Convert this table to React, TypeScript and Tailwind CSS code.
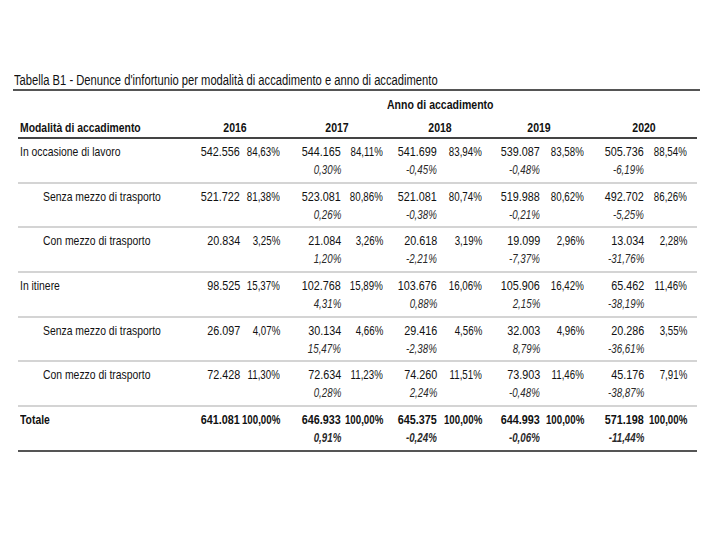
const FONT = { fontFamily: '"Liberation Sans Narrow", "Arial Narrow", "Liberation Sans", Arial, sans-serif' };

type Row = {
  label: string;
  indent?: boolean;
  bold?: boolean;
  values: [string, string][];
  change: string[];
};

const ROWS: Row[] = [
  {
    label: "In occasione di lavoro",
    values: [["542.556", "84,63%"], ["544.165", "84,11%"], ["541.699", "83,94%"], ["539.087", "83,58%"], ["505.736", "88,54%"]],
    change: ["", "0,30%", "-0,45%", "-0,48%", "-6,19%"],
  },
  {
    label: "Senza mezzo di trasporto",
    indent: true,
    values: [["521.722", "81,38%"], ["523.081", "80,86%"], ["521.081", "80,74%"], ["519.988", "80,62%"], ["492.702", "86,26%"]],
    change: ["", "0,26%", "-0,38%", "-0,21%", "-5,25%"],
  },
  {
    label: "Con mezzo di trasporto",
    indent: true,
    values: [["20.834", "3,25%"], ["21.084", "3,26%"], ["20.618", "3,19%"], ["19.099", "2,96%"], ["13.034", "2,28%"]],
    change: ["", "1,20%", "-2,21%", "-7,37%", "-31,76%"],
  },
  {
    label: "In itinere",
    values: [["98.525", "15,37%"], ["102.768", "15,89%"], ["103.676", "16,06%"], ["105.906", "16,42%"], ["65.462", "11,46%"]],
    change: ["", "4,31%", "0,88%", "2,15%", "-38,19%"],
  },
  {
    label: "Senza mezzo di trasporto",
    indent: true,
    values: [["26.097", "4,07%"], ["30.134", "4,66%"], ["29.416", "4,56%"], ["32.003", "4,96%"], ["20.286", "3,55%"]],
    change: ["", "15,47%", "-2,38%", "8,79%", "-36,61%"],
  },
  {
    label: "Con mezzo di trasporto",
    indent: true,
    values: [["72.428", "11,30%"], ["72.634", "11,23%"], ["74.260", "11,51%"], ["73.903", "11,46%"], ["45.176", "7,91%"]],
    change: ["", "0,28%", "2,24%", "-0,48%", "-38,87%"],
  },
  {
    label: "Totale",
    bold: true,
    values: [["641.081", "100,00%"], ["646.933", "100,00%"], ["645.375", "100,00%"], ["644.993", "100,00%"], ["571.198", "100,00%"]],
    change: ["", "0,91%", "-0,24%", "-0,06%", "-11,44%"],
  },
];

// label | n16 p16 | n17 p17 | n18 p18 | n19 p19 | n20 p20 | tail
const GRID = "grid grid-cols-[172px_50px_40px_61px_42px_54px_45px_58px_44px_60px_43px_10px]";

// the source uses a narrow face; squeeze the regular one to match
const NUM = "inline-block shrink-0 whitespace-nowrap origin-right scale-x-[0.8]";
const PCT = "inline-block shrink-0 whitespace-nowrap origin-right scale-x-[0.72]";
const NARROW_L = "inline-block whitespace-nowrap origin-left scale-x-[0.77]";
const NARROW_C = "inline-block whitespace-nowrap origin-center scale-x-[0.78]";
const CELL_R = "flex justify-end";

const YEARS = [
  { y: "2016", cls: "col-span-2 text-center" },
  { y: "2017", cls: "col-span-2 text-center pl-[11px]" },
  { y: "2018", cls: "col-span-2 text-center pl-[15px]" },
  { y: "2019", cls: "col-span-2 text-center pl-[13px]" },
  { y: "2020", cls: "col-span-2 text-center pl-[18px]" },
];

function DataRow({ row, last }: { row: Row; last: boolean }) {
  const weight = row.bold ? "font-bold" : "";
  return (
    <div
      className={`pt-[4px] pb-[2.67px] border-b-2 ${last ? "border-[#555]" : "border-[#d4d4d4]"}`}
    >
      <div className={`${GRID} h-[18px] leading-[18px] text-[13.5px] text-[#111] ${weight}`}>
        <div className={row.indent ? "pl-[25px]" : "pl-[2px]"}>
          <span className={NARROW_L}>{row.label}</span>
        </div>
        {row.values.map(([n, p], i) => [
          <div key={`n${i}`} className={CELL_R}>
            <span className={NUM}>{n}</span>
          </div>,
          <div key={`p${i}`} className={CELL_R}>
            <span className={PCT}>{p}</span>
          </div>,
        ])}
        <div />
      </div>
      <div className={`${GRID} h-[18px] leading-[18px] text-[13.5px] italic text-[#2a2a2a] ${weight}`}>
        <div />
        {row.change.map((c, i) => [
          <div key={`c${i}`} className={CELL_R}>
            <span className={PCT}>{c}</span>
          </div>,
          <div key={`e${i}`} />,
        ])}
        <div />
      </div>
    </div>
  );
}

export default function App() {
  return (
    <div className="w-[724px] h-[543px] bg-white" style={FONT}>
      <div className="pt-[72px] pl-[13px] pr-[24px]">
        <div className="h-[16px] leading-[16px] text-[14px] text-[#111] pl-[1px]">
          <span className="inline-block whitespace-nowrap origin-left scale-x-[0.8]">
            Tabella B1 - Denunce d'infortunio per modalità di accadimento e anno di accadimento
          </span>
        </div>
        <div className="mt-[1px] h-[2px] bg-[#555]" />
      </div>
      <div className="ml-[18px] w-[679px] mt-[6px]">
        <div className={`${GRID} h-[16px] leading-[16px] text-[13.5px] font-bold text-[#111]`}>
          <div />
          <div className="col-span-10 text-center pl-[3px]">
            <span className={NARROW_C}>Anno di accadimento</span>
          </div>
          <div />
        </div>
        <div className={`${GRID} mt-[7px] pb-[1px] h-[19px] leading-[16px] text-[13.5px] font-bold text-[#111] border-b-2 border-[#444]`}>
          <div className="pl-[2px]">
            <span className={NARROW_L}>Modalità di accadimento</span>
          </div>
          {YEARS.map((y) => (
            <div key={y.y} className={y.cls}>
              <span className={NARROW_C}>{y.y}</span>
            </div>
          ))}
          <div />
        </div>
        {ROWS.map((r, i) => (
          <DataRow key={i} row={r} last={i === ROWS.length - 1} />
        ))}
      </div>
    </div>
  );
}
